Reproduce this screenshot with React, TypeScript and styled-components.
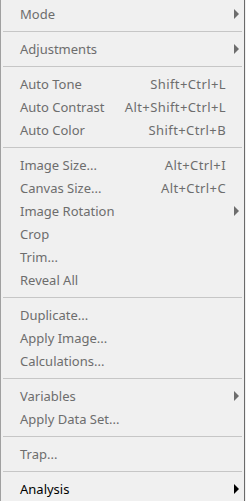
import styled, { createGlobalStyle } from 'styled-components';

const GlobalStyle = createGlobalStyle`
  html, body {
    margin: 0;
    padding: 0;
    background: #f0f0f0;
  }
  body {
    font-family: "Segoe UI", "Noto Sans", "Open Sans", sans-serif;
  }
`;

const Menu = styled.div`
  width: 245px;
  height: 501px;
  box-sizing: border-box;
  background: #f0f0f0;
  border-left: 1px solid #a0a0a0;
  border-right: 1px solid #6a6a6a;
  padding-top: 2px;
  overflow: hidden;
`;

const Item = styled.div<{ $enabled?: boolean }>`
  display: flex;
  align-items: center;
  height: 23px;
  padding-left: 19px;
  padding-right: 5px;
  font-size: 13px;
  color: ${({ $enabled }) => ($enabled ? '#000000' : '#6d6d6d')};
  white-space: nowrap;
`;

const Label = styled.span`
  flex: 1;
`;

const Shortcut = styled.span`
  margin-right: 13px;
  letter-spacing: 0.4px;
`;

const Arrow = styled.span<{ $enabled?: boolean }>`
  width: 0;
  height: 0;
  border-top: 5px solid transparent;
  border-bottom: 5px solid transparent;
  border-left: 5px solid ${({ $enabled }) => ($enabled ? '#000000' : '#6d6d6d')};
`;

const Separator = styled.div`
  height: 12px;
  display: flex;
  align-items: center;
  padding: 0 2px 0 2px;

  &::after {
    content: '';
    flex: 1;
    height: 1px;
    background: #c6c6c6;
  }
`;

type Entry =
  | { sep: true }
  | { label: string; shortcut?: string; submenu?: boolean; enabled?: boolean };

const entries: Entry[] = [
  { label: 'Mode', submenu: true },
  { sep: true },
  { label: 'Adjustments', submenu: true },
  { sep: true },
  { label: 'Auto Tone', shortcut: 'Shift+Ctrl+L' },
  { label: 'Auto Contrast', shortcut: 'Alt+Shift+Ctrl+L' },
  { label: 'Auto Color', shortcut: 'Shift+Ctrl+B' },
  { sep: true },
  { label: 'Image Size...', shortcut: 'Alt+Ctrl+I' },
  { label: 'Canvas Size...', shortcut: 'Alt+Ctrl+C' },
  { label: 'Image Rotation', submenu: true },
  { label: 'Crop' },
  { label: 'Trim...' },
  { label: 'Reveal All' },
  { sep: true },
  { label: 'Duplicate...' },
  { label: 'Apply Image...' },
  { label: 'Calculations...' },
  { sep: true },
  { label: 'Variables', submenu: true },
  { label: 'Apply Data Set...' },
  { sep: true },
  { label: 'Trap...' },
  { sep: true },
  { label: 'Analysis', submenu: true, enabled: true },
];

export default function App() {
  return (
    <>
      <GlobalStyle />
      <Menu>
        {entries.map((e, i) =>
          'sep' in e ? (
            <Separator key={i} />
          ) : (
            <Item key={i} $enabled={e.enabled}>
              <Label>{e.label}</Label>
              {e.shortcut && <Shortcut>{e.shortcut}</Shortcut>}
              {e.submenu && <Arrow $enabled={e.enabled} />}
            </Item>
          )
        )}
      </Menu>
    </>
  );
}
